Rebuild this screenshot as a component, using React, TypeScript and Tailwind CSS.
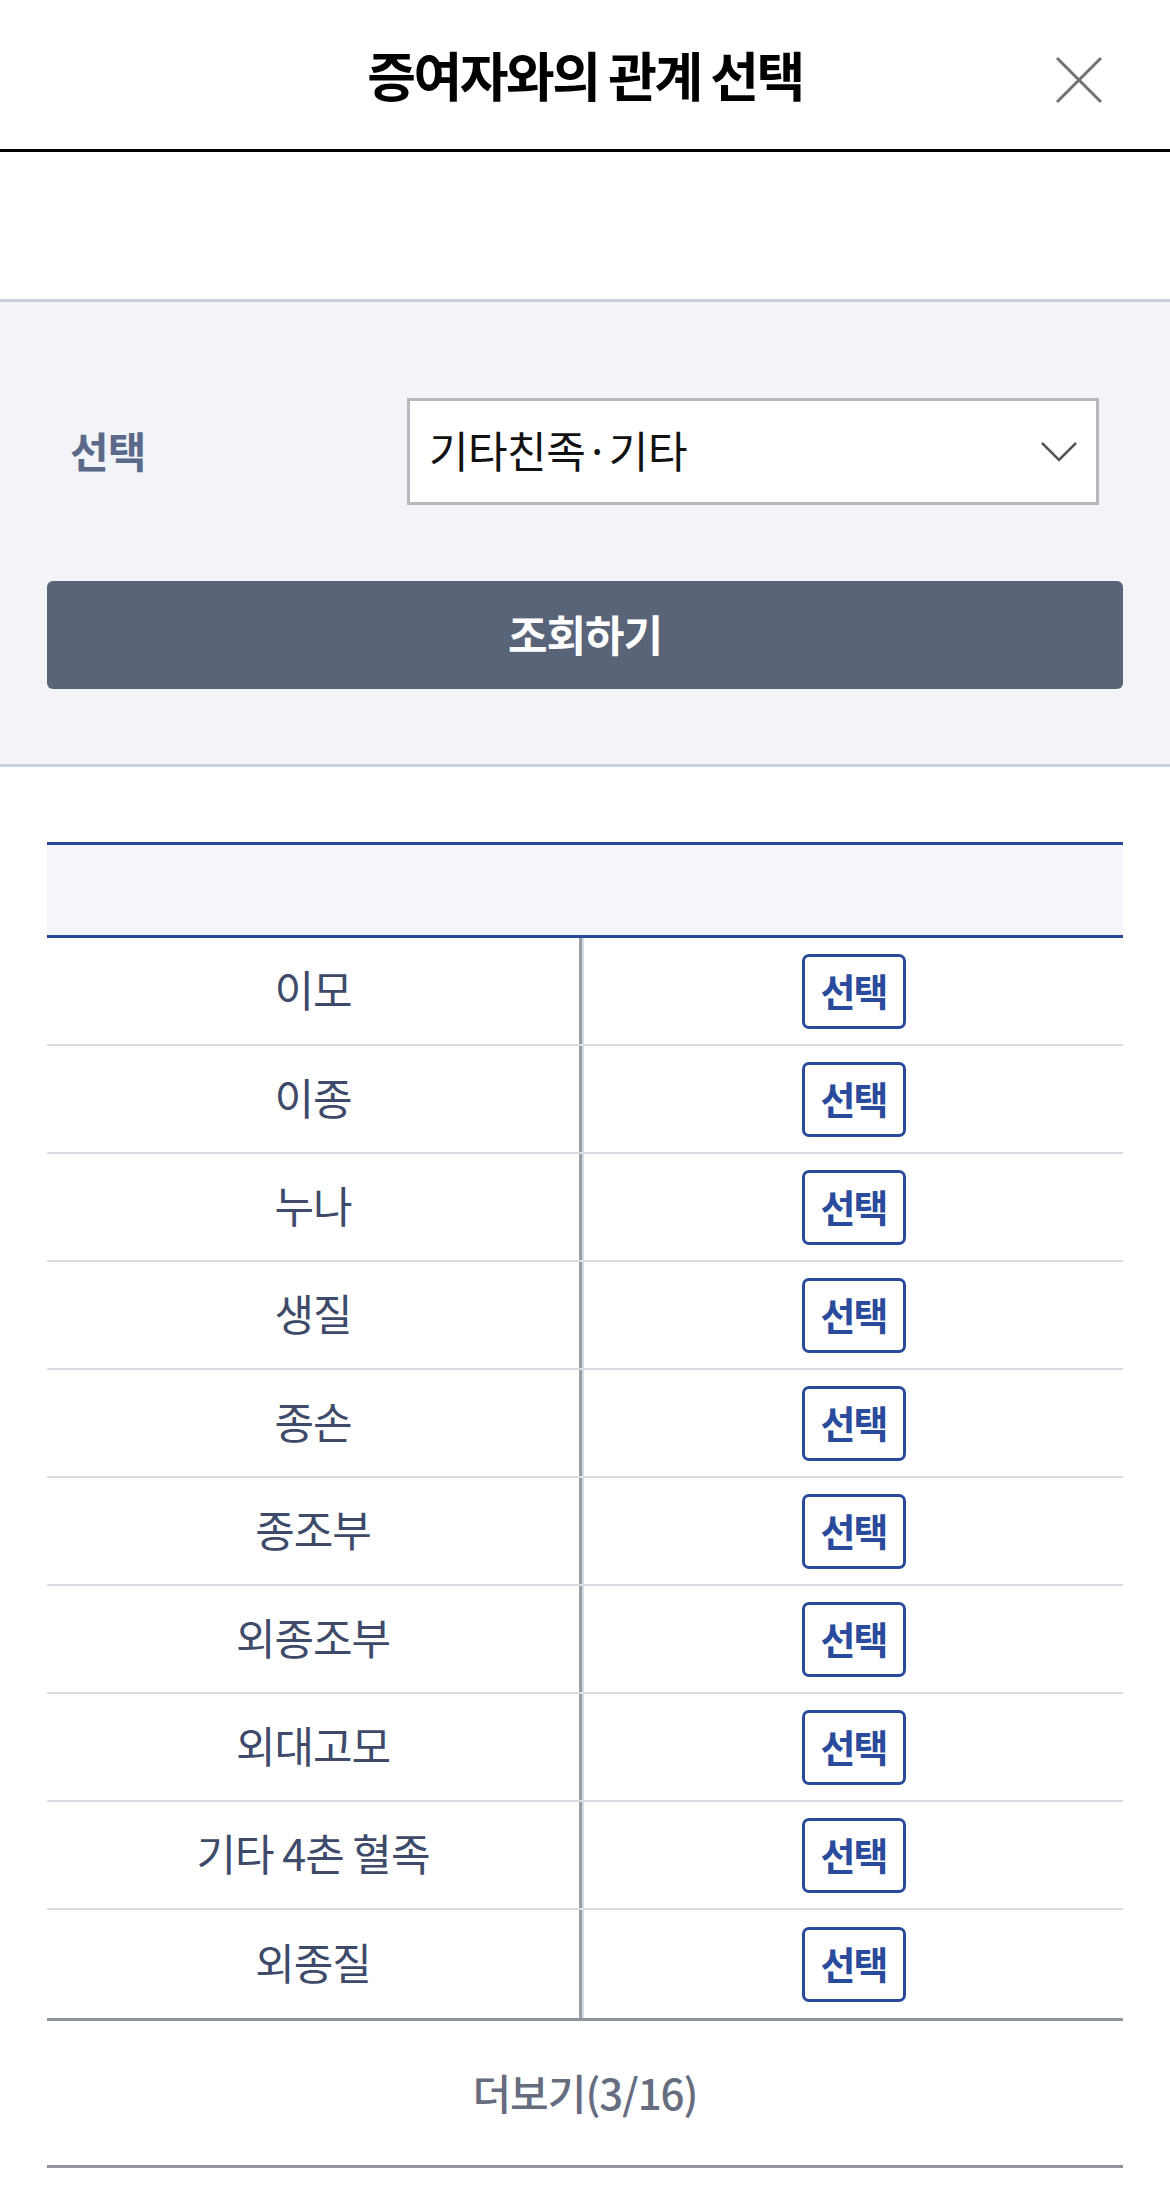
import React from "react";

const rows = [
  "이모",
  "이종",
  "누나",
  "생질",
  "종손",
  "종조부",
  "외종조부",
  "외대고모",
  "기타 4촌 혈족",
  "외종질",
];

const font = { fontFamily: '"Noto Sans CJK KR", "Noto Sans", sans-serif' };

export default function App() {
  return (
    <div className="w-[1170px] min-h-[2199px] bg-white" style={font}>
      {/* Header */}
      <div className="relative flex h-[152px] items-center justify-center border-b-[3px] border-black">
        <h1 className="text-[53px] font-bold tracking-[-2.5px] text-black leading-none">
          증여자와의 관계 선택
        </h1>
        <svg
          className="absolute left-[1054px] top-[55px]"
          width="50"
          height="50"
          viewBox="0 0 50 50"
        >
          <path d="M3 3 L47 47 M47 3 L3 47" stroke="#6f7277" strokeWidth="3" fill="none" />
        </svg>
      </div>

      {/* spacer */}
      <div className="h-[147px]" />

      {/* Search panel */}
      <div className="border-y-[3px] border-[#c8d0dc] bg-[#f2f4f8] px-[47px] pt-[96px] pb-[75px]">
        <div className="flex h-[107px] items-center">
          <div className="w-[360px] pl-[23px] pb-[4px] text-[42px] font-bold tracking-[-1px] text-[#5b6a8b]">
            선택
          </div>
          <div className="flex h-[107px] w-[692px] items-center justify-between border-[3px] border-[#b5b7bc] bg-white pl-[19px] pr-[18px]">
            <span className="pb-[4px] text-[43px] tracking-[-0.5px] text-[#111]">기타친족·기타</span>
            <svg width="38" height="22" viewBox="0 0 38 22">
              <path d="M2 2 L19 19 L36 2" stroke="#555" strokeWidth="2.5" fill="none" />
            </svg>
          </div>
        </div>
        <div className="mt-[76px] flex h-[108px] items-center justify-center rounded-[6px] bg-[#5a6479]">
          <span className="pb-[4px] text-[43px] font-bold tracking-[-1px] text-white">조회하기</span>
        </div>
      </div>

      {/* Table */}
      <div className="mx-[47px] mt-[75px]">
        <div className="h-[96px] border-y-[3px] border-[#26489a] bg-[#f4f6f9]" />
        {rows.map((r, i) => (
          <div
            key={r}
            className={`flex h-[108px] ${
              i === rows.length - 1 ? "" : "border-b-2 border-[#d9dde3]"
            }`}
          >
            <div className="flex w-[535px] items-center justify-center border-r-[3px] border-[#989da6] pb-[5px] text-[43px] tracking-[-1px] text-[#3d4a69]">
              {r}
            </div>
            <div className="flex flex-1 items-center justify-center border-l-2 border-[#d6dbe3]">
              <div className="flex h-[75px] w-[104px] items-center justify-center rounded-[7px] border-[3px] border-[#2a4a9c] pb-[3px] text-[38px] font-bold tracking-[-2px] text-[#2a4a9c]">
                선택
              </div>
            </div>
          </div>
        ))}
        <div className="flex h-[150px] items-center justify-center border-y-[3px] border-[#8f939b]">
          <span className="pb-[4px] text-[42px] font-medium tracking-[-1px] text-[#656d7f]">더보기(3/16)</span>
        </div>
      </div>
    </div>
  );
}
